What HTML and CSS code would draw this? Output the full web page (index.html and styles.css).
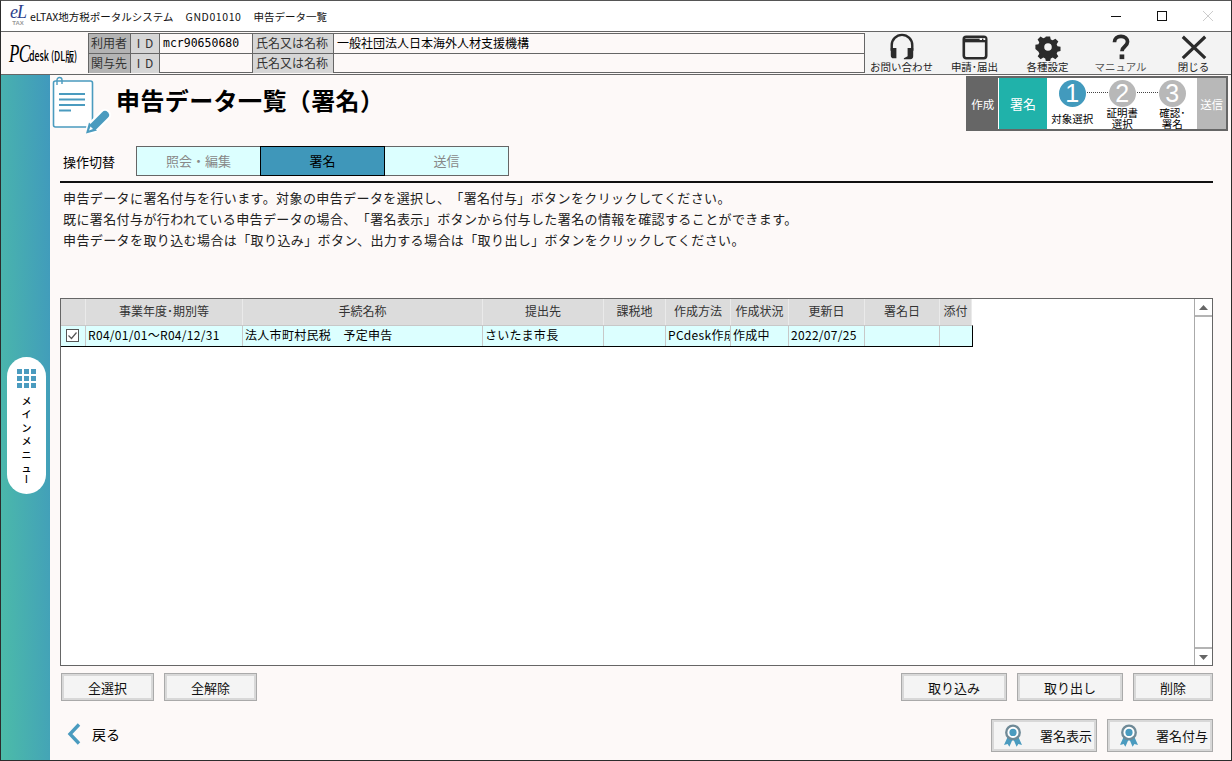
FILE: index.html
```html
<!DOCTYPE html>
<html lang="ja">
    <head>
        <meta charset="UTF-8">
        <meta name="viewport" content="width=device-width, initial-scale=1.0">
        <title>申告データ一覧</title>
        <link rel="stylesheet" href="styles.css">
    </head>
    <body>
        <div class="window">
            <div class="titlebar">
                <span class="app-logo"><i>eL</i><b>TAX</b></span>
                <span class="app-title">eLTAX地方税ポータルシステム</span>
                <span class="app-title code">GND01010</span>
                <span class="app-title">申告データ一覧</span>
                <div class="win-btns">
                    <svg width="46" height="30" viewBox="0 0 46 30"><path d="M18 15.5h10" stroke="#111" fill="none"/></svg>
                    <svg width="46" height="30" viewBox="0 0 46 30"><rect x="18.5" y="10.5" width="9" height="9" stroke="#111" fill="none"/></svg>
                    <svg width="46" height="30" viewBox="0 0 46 30"><path d="M18 10l10 10M28 10L18 20" stroke="#ccc" fill="none"/></svg>
                </div>
            </div>

            <div class="header">
                <div class="pc-logo"><i>PC</i><span>desk (DL版)</span></div>
                <div class="info">
                    <div class="c c-dark">利用者</div>
                    <div class="c c-gray spaced">I D</div>
                    <div class="c c-val mono">mcr90650680</div>
                    <div class="c c-gray">氏名又は名称</div>
                    <div class="c c-val">一般社団法人日本海外人材支援機構</div>
                    <div class="c c-dark">関与先</div>
                    <div class="c c-gray spaced">I D</div>
                    <div class="c c-val"></div>
                    <div class="c c-gray">氏名又は名称</div>
                    <div class="c c-val"></div>
                </div>
                <div class="tools">
                    <div class="tool">
                        <svg width="30" height="30" viewBox="0 0 30 30"><path d="M4 19v-6a11 11 0 0 1 22 0v6" fill="none" stroke="#2b2b2b" stroke-width="2.6"/><path d="M3 16h6v11H6a3 3 0 0 1-3-3zM27 16h-6v9l-4 2v1h7a3 3 0 0 0 3-3z" fill="#2b2b2b"/></svg>
                        <span>お問い合わせ</span>
                    </div>
                    <div class="tool">
                        <svg width="30" height="30" viewBox="0 0 30 30"><rect x="3" y="4" width="24" height="23" rx="2.500" fill="none" stroke="#2b2b2b" stroke-width="2.800"/><path d="M3 8h24" stroke="#2b2b2b" stroke-width="4"/><path d="M20 5.500h2.500v2H20zM24 5.500h2v2h-2z" fill="#fff"/></svg>
                        <span>申請･届出</span>
                    </div>
                    <div class="tool">
                        <svg width="30" height="30" viewBox="0 0 30 30"><path fill-rule="evenodd" fill="#2b2b2b" d="M12.500 3h5l.8 3.600 2.300 1 3.200-2 3.500 3.500-2 3.200 1 2.300 3.600.8v5l-3.600.8-1 2.300 2 3.200-3.500 3.500-3.200-2-2.300 1-.8 3.300h-5l-.8-3.300-2.300-1-3.200 2-3.500-3.500 2-3.200-1-2.300L0 18v-5l3.600-.8 1-2.300-2-3.200 3.500-3.500 3.200 2 2.300-1zM15 11a4.500 4.500 0 1 0 0 9 4.500 4.500 0 0 0 0-9z" transform="translate(1.500 1) scale(.9)"/></svg>
                        <span>各種設定</span>
                    </div>
                    <div class="tool">
                        <svg width="30" height="30" viewBox="0 0 30 30"><path d="M8 10c0-4 3-6.500 7-6.500s7 2.500 7 6c0 5-6 5-6 10" fill="none" stroke="#2b2b2b" stroke-width="4"/><rect x="13.500" y="23" width="5" height="5" fill="#2b2b2b"/></svg>
                        <span class="light">マニュアル</span>
                    </div>
                    <div class="tool">
                        <svg width="30" height="30" viewBox="0 0 30 30"><path d="M3 4l24 23M27 4L3 27" stroke="#2b2b2b" stroke-width="3.400" fill="none"/></svg>
                        <span>閉じる</span>
                    </div>
                </div>
            </div>

            <div class="body">
                <div class="sidebar">
                    <div class="menu-pill">
                        <div class="dots">
                            <i></i><i></i><i></i><i></i><i></i><i></i><i></i><i></i><i></i>
                        </div>
                        <span>メ</span><span>イ</span><span>ン</span><span>メ</span><span>ニ</span><span>ュ</span><span class="bar">ー</span>
                    </div>
                </div>

                <div class="main">
                    <div class="head">
                        <svg class="doc-icon" width="60" height="60" viewBox="0 0 60 60">
                            <rect x="1.500" y="5" width="39" height="46" rx="2" fill="#fff" stroke="#4a9bbf" stroke-width="1.600"/>
                            <path d="M7 18h26M7 23.500h26M7 29h26M7 34.500h12" stroke="#4a9bbf" stroke-width="2" fill="none"/>
                            <path d="M5 9V4a2.500 2.500 0 0 1 5 0v4" fill="none" stroke="#4a9bbf" stroke-width="1.400"/>
                            <path d="M40 52l13-13" stroke="#fff" stroke-width="12" stroke-linecap="round"/>
                            <path d="M42 50l11-11" stroke="#4a9bbf" stroke-width="8" stroke-linecap="round"/>
                            <path d="M34 57.500l3-11 8 8z" fill="#4a9bbf"/>
                            <path d="M37 54.500l1.500-4 2.500 2.500z" fill="#fff"/>
                        </svg>
                        <h1>申告データ一覧（署名）</h1>
                        <div class="steps">
                            <div class="st-done">作成</div>
                            <div class="st-now">署名</div>
                            <div class="st-list">
                                <div class="st"><b class="num on">1</b><span>対象選択</span></div>
                                <div class="st"><b class="num">2</b><span>証明書<br>選択</span></div>
                                <div class="st"><b class="num">3</b><span>確認･<br>署名</span></div>
                                <i class="dots-line l1"></i>
                                <i class="dots-line l2"></i>
                            </div>
                            <div class="st-next">送信</div>
                        </div>
                    </div>

                    <div class="tabs-row">
                        <label>操作切替</label>
                        <div class="tab">照会・編集</div>
                        <div class="tab active">署名</div>
                        <div class="tab">送信</div>
                    </div>
                    <div class="rule"></div>

                    <div class="intro">
                        <p>申告データに署名付与を行います。対象の申告データを選択し、「署名付与」ボタンをクリックしてください。</p>
                        <p>既に署名付与が行われている申告データの場合、「署名表示」ボタンから付与した署名の情報を確認することができます。</p>
                        <p>申告データを取り込む場合は「取り込み」ボタン、出力する場合は「取り出し」ボタンをクリックしてください。</p>
                    </div>

                    <div class="grid-box">
                        <div class="list">
                            <div class="row row-head">
                                <div></div>
                                <div>事業年度･期別等</div>
                                <div>手続名称</div>
                                <div>提出先</div>
                                <div>課税地</div>
                                <div>作成方法</div>
                                <div>作成状況</div>
                                <div>更新日</div>
                                <div>署名日</div>
                                <div>添付</div>
                            </div>
                            <div class="row row-data">
                                <div class="chk">
                                    <svg width="13" height="13" viewBox="0 0 13 13"><rect x=".5" y=".5" width="12" height="12" fill="#fff" stroke="#555"/><path d="M2.500 6.500l3 3 5-6" fill="none" stroke="#555" stroke-width="1.200"/></svg>
                                </div>
                                <div>R04/01/01～R04/12/31</div>
                                <div>法人市町村民税　予定申告</div>
                                <div>さいたま市長</div>
                                <div></div>
                                <div>PCdesk作成</div>
                                <div>作成中</div>
                                <div>2022/07/25</div>
                                <div></div>
                                <div></div>
                            </div>
                        </div>
                        <div class="scrollbar">
                            <div class="arrow"><svg width="9" height="5" viewBox="0 0 9 5"><path d="M4.500 0L9 5H0z" fill="#666"/></svg></div>
                            <div class="arrow"><svg width="9" height="5" viewBox="0 0 9 5"><path d="M0 0h9L4.500 5z" fill="#666"/></svg></div>
                        </div>
                    </div>

                    <div class="btn-row">
                        <button class="btn w93">全選択</button>
                        <button class="btn w93">全解除</button>
                        <button class="btn w106 push">取り込み</button>
                        <button class="btn w106">取り出し</button>
                        <button class="btn w80">削除</button>
                    </div>

                    <div class="foot">
                        <a class="back">
                            <svg width="16" height="24" viewBox="0 0 16 24"><path d="M13 2.500L4 12l9 9.500" fill="none" stroke="#4a9bbf" stroke-width="3.400"/></svg>
                            戻る
                        </a>
                        <button class="btn sign push">
                            <svg width="18" height="24" viewBox="0 0 20 26"><path d="M4 14l-4 9 4-1 2 3 3-7h2l3 7 2-3 4 1-4-9z" fill="#4a9bbf"/><circle cx="10" cy="9" r="7.500" fill="#fff" stroke="#6f8a97" stroke-width="2.600"/><circle cx="10" cy="9" r="4" fill="#4a9bbf"/></svg>
                            <span>署名表示</span>
                        </button>
                        <button class="btn sign">
                            <svg width="18" height="24" viewBox="0 0 20 26"><path d="M4 14l-4 9 4-1 2 3 3-7h2l3 7 2-3 4 1-4-9z" fill="#4a9bbf"/><circle cx="10" cy="9" r="7.500" fill="#fff" stroke="#6f8a97" stroke-width="2.600"/><circle cx="10" cy="9" r="4" fill="#4a9bbf"/></svg>
                            <span>署名付与</span>
                        </button>
                    </div>
                </div>
            </div>
        </div>
    </body>
</html>
```

FILE: styles.css
```css
*{
    box-sizing: border-box;
}
html, body{
    margin: 0;
    height: 100%;
    overflow: hidden;
}
body{
    font-family: "Noto Sans CJK JP", "Noto Sans", sans-serif;
    font-size: 12px;
    color: #000;
    text-spacing-trim: space-all;
}
.window{
    width: 1232px;
    height: 761px;
    display: flex;
    flex-direction: column;
    border: 1px solid #2c2c2c;
    border-top-color: #555;
    background-color: #fdf9f8;
}

/* title bar */
.titlebar{
    height: 31px;
    flex: none;
    display: flex;
    align-items: center;
    background-color: #fff;
    border-bottom: 1px solid #666;
}
.app-logo{
    width: 20px;
    height: 22px;
    flex: none;
    margin-left: 7px;
    display: flex;
    flex-direction: column;
    align-items: center;
    line-height: 1;
}
.app-logo i{
    font: italic 18px/15px "Liberation Serif", serif;
    letter-spacing: -1px;
    color: #2c3f8c;
}
.app-logo b{
    font: bold 6px/6px "Liberation Sans", sans-serif;
    color: #999;
}
.app-title{
    font-size: 10.500px;
    margin-left: 12px;
    color: #111;
}
.app-logo + .app-title{
    margin-left: 2px;
}
.code{
    letter-spacing: .6px;
}
.win-btns{
    margin-left: auto;
    display: flex;
    margin-right: 0;
}

/* header */
.header{
    height: 43px;
    flex: none;
    display: flex;
    border-bottom: 1px solid #666;
}
.pc-logo{
    width: 87px;
    flex: none;
    padding-left: 8px;
    display: flex;
    align-items: center;
    white-space: nowrap;
}
.pc-logo i{
    width: 20px;
    flex: none;
    font: italic 25px/1 "Liberation Serif", serif;
    letter-spacing: -1px;
    display: inline-block;
    transform: scaleX(.68);
    transform-origin: left center;
}
.pc-logo span{
    font-size: 13px;
    font-weight: 500;
    display: inline-block;
    transform: scaleX(.68);
    transform-origin: left center;
    margin-top: 5px;
}
.info{
    width: 777px;
    height: 40px;
    margin-top: 1px;
    flex: none;
    display: grid;
    grid-template-columns: 42px 29px 93px 81px 1fr;
    grid-template-rows: 20px 19px;
    border: 1px solid #666;
}
.c{
    border-right: 1px solid #666;
    border-bottom: 1px solid #666;
    padding-left: 3px;
    line-height: 18px;
    white-space: nowrap;
    overflow: hidden;
    color: #333;
}
.c:nth-child(5), .c:nth-child(10){
    border-right: 0;
}
.c:nth-child(n+6){
    border-bottom: 0;
}
.c-dark{
    background-color: #b4b4b4;
    padding-left: 2px;
}
.c-gray{
    background-color: #d6d6d6;
}
.c-val{
    color: #000;
}
.spaced{
    text-align: center;
    padding: 0;
    word-spacing: 2px;
}
.mono{
    font: 11.500px/18px "DejaVu Sans Mono", monospace;
}
.tools{
    flex: 1;
    display: flex;
    padding-top: 1px;
    background-color: #f3f3f3;
}
.tool{
    width: 73px;
    display: flex;
    flex-direction: column;
    align-items: center;
    line-height: 11px;
    font-size: 10.500px;
    color: #222;
    white-space: nowrap;
}
.tool svg{
    height: 28px;
    display: block;
}
.tool .light{
    color: #555;
}

/* left bar */
.body{
    flex: 1;
    display: flex;
    min-height: 0;
}
.sidebar{
    width: 49px;
    flex: none;
    padding: 282px 0 0 6px;
    background: linear-gradient(88deg, #4cbca8, #4099bd);
}
.menu-pill{
    width: 39px;
    height: 137px;
    padding-top: 12px;
    border-radius: 20px;
    background-color: #fff;
    display: flex;
    flex-direction: column;
    align-items: center;
    font-size: 10px;
    line-height: 13.400px;
    font-weight: 500;
}
.menu-pill span{
    display: block;
}
.menu-pill .bar{
    writing-mode: vertical-rl;
    height: 13px;
    line-height: 13px;
    font-size: 10px;
}
.dots{
    width: 19px;
    height: 21px;
    margin-bottom: 4px;
    display: grid;
    grid-template-columns: repeat(3, 5px);
    grid-template-rows: repeat(3, 5px);
    gap: 2px;
}
.dots i{
    background-color: #4a9bbf;
}

/* main */
.main{
    flex: 1;
    min-width: 0;
    display: flex;
    flex-direction: column;
    padding: 0 18px 8px 10px;
}
.head{
    height: 71px;
    flex: none;
    display: flex;
    margin-right: -15px;
    margin-left: -8px;
}
.doc-icon{
    flex: none;
    margin-top: 1px;
}
h1{
    margin: 8px 0 0 4px;
    font-size: 24px;
    line-height: 34px;
    letter-spacing: .4px;
    font-weight: 700;
}
.steps{
    margin: 1px 0 0 auto;
    width: 262px;
    height: 55px;
    border: 2px solid #666;
    display: flex;
    background-color: #fff;
    color: #fff;
    font-size: 11.500px;
}
.st-done, .st-next{
    width: 30px;
    display: flex;
    align-items: center;
    justify-content: center;
    background-color: #666;
}
.st-next{
    background-color: #b8b8b8;
    width: 29px;
}
.st-now{
    width: 49px;
    margin-left: 1px;
    display: flex;
    align-items: center;
    justify-content: center;
    background-color: #20b2aa;
    font-size: 13px;
}
.st-list{
    flex: 1;
    display: flex;
    position: relative;
}
.st{
    width: 50px;
    display: flex;
    flex-direction: column;
    align-items: center;
    color: #000;
    font-size: 10.500px;
    line-height: 11px;
    text-align: center;
    padding-top: 2px;
}
.st span{
    height: 22px;
    display: flex;
    align-items: center;
}
.num{
    width: 27px;
    height: 27px;
    flex: none;
    border-radius: 50%;
    background-color: #b8b8b8;
    color: #fff;
    font: 25px/27px "Liberation Sans", sans-serif;
}
.num.on{
    background-color: #429abd;
}
.dots-line{
    position: absolute;
    top: 14px;
    width: 21px;
    border-top: 1px dotted #444;
}
.l1{
    left: 40px;
}
.l2{
    left: 90px;
}

.tabs-row{
    height: 30px;
    flex: none;
    display: flex;
    align-items: center;
    padding-left: 3px;
}
.tabs-row label{
    width: 73px;
    font-size: 13px;
}
.tab{
    width: 125px;
    height: 30px;
    margin-right: -1px;
    border: 1px solid #666;
    background-color: #dcffff;
    color: #888;
    text-align: center;
    font-size: 13px;
    line-height: 28px;
}
.tab.active{
    position: relative;
    background-color: #3f97ba;
    border-color: #000;
    color: #000;
}
.rule{
    height: 2px;
    flex: none;
    margin-top: 5px;
    background-color: #111;
}
.intro{
    height: 115px;
    flex: none;
    padding: 4px 0 0 3px;
    font-size: 13px;
    letter-spacing: .4px;
    color: #222;
}
.intro p{
    margin: 0;
    line-height: 21px;
}

/* data grid */
.grid-box{
    flex: 1;
    min-height: 0;
    display: flex;
    border: 1px solid #666;
    background-color: #fff;
}
.list{
    flex: 1;
}
.row{
    display: grid;
    grid-template-columns: 25px 157px 240px 121px 62px 65px 58px 76px 75px 32px;
    white-space: nowrap;
}
.row > div{
    overflow: hidden;
    border-right: 1px solid #c8c8c8;
}
.row-head{
    width: 911px;
    height: 26px;
    background-color: #dcdcdc;
    text-align: center;
    line-height: 24px;
    color: #333;
    font-size: 12px;
}
.row-head > div{
    border-right-color: #eaeaea;
}
.row-data{
    width: 912px;
    height: 22px;
    background-color: #dcffff;
    border-right: 1px solid #000;
    border-bottom: 1px solid #000;
    border-top: 1px solid #c8c8c8;
    line-height: 18px;
    letter-spacing: .3px;
}
.row-data > div{
    padding-left: 2px;
}
.row-data > div:last-child{
    border-right: 0;
}
.row-data .chk{
    padding: 3px 0 0 5px;
    line-height: 0;
}
.scrollbar{
    width: 18px;
    flex: none;
    display: flex;
    flex-direction: column;
    justify-content: space-between;
    border-left: 1px solid #aaa;
}
.arrow{
    height: 18px;
    display: flex;
    align-items: center;
    justify-content: center;
}
.arrow:first-child{
    border-bottom: 2px solid #b4b4b4;
}
.arrow:last-child{
    border-top: 2px solid #b4b4b4;
}

/* buttons */
.btn-row{
    flex: none;
    display: flex;
    gap: 10px;
    margin-top: 7px;
    padding-left: 1px;
}
.btn{
    height: 28px;
    padding: 0;
    border: 1px solid #aaa;
    box-shadow: inset 0 0 0 2px #d8d8d8;
    background-color: #f4f4f4;
    font: 13px "Noto Sans CJK JP", sans-serif;
    color: #111;
}
.w93{
    width: 93px;
}
.w106{
    width: 106px;
}
.w80{
    width: 80px;
}
.push{
    margin-left: auto;
}
.foot{
    flex: none;
    display: flex;
    gap: 10px;
    align-items: flex-end;
    margin-top: 18px;
    height: 33px;
}
.back{
    display: flex;
    align-items: center;
    gap: 10px;
    font-size: 14px;
    padding: 0 0 3px 6px;
    height: 33px;
}
.sign{
    width: 106px;
    height: 33px;
    display: flex;
    align-items: center;
    justify-content: space-between;
    padding: 0 4px 0 12px;
}
```
